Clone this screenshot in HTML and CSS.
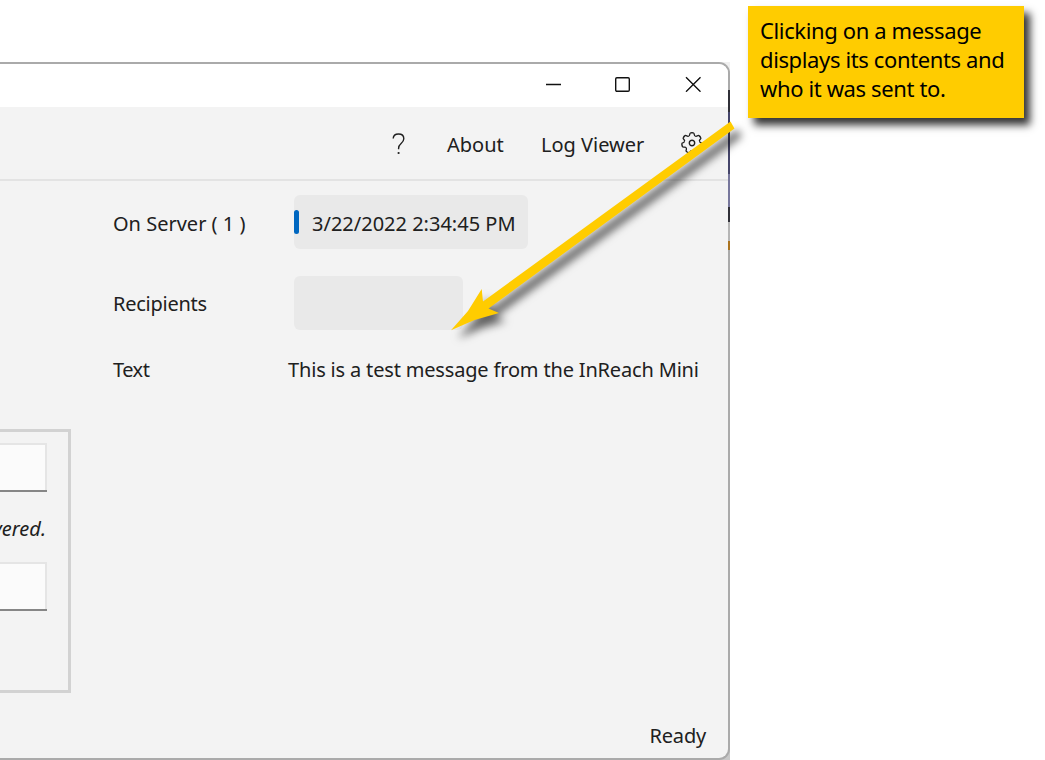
FILE: index.html
```html
<!DOCTYPE html>
<html lang="en">
<head>
<meta charset="utf-8">
<title>Messages</title>
<link rel="stylesheet" href="styles.css">
</head>
<body>
<div class="desktop">
  <main class="window">
    <header class="titlebar">
      <svg class="win-icon" width="16" height="16" viewBox="0 0 16 16"><path d="M1 8.500h15"/></svg>
      <svg class="win-icon" width="16" height="16" viewBox="0 0 16 16"><rect x=".7" y="1.700" width="13.600" height="13.600" rx="1.200"/></svg>
      <svg class="win-icon" width="16" height="16" viewBox="0 0 16 16"><path d="M1 1.200l14.500 14.500M15.500 1.200L1 15.700"/></svg>
    </header>
    <nav class="toolbar">
      <svg class="help" width="14" height="22" viewBox="0 0 14 22"><path d="M1.200 5.600C1.300 2.700 3.500 1 6.500 1c3.200 0 5.300 1.800 5.300 4.700 0 2.300-1.200 3.500-2.700 4.800C7.500 11.900 6.600 13 6.600 15.200v1"/><circle cx="6.600" cy="20" r="1.100"/></svg>
      <span class="about">About</span>
      <span class="log">Log Viewer</span>
      <svg class="gear" width="22" height="22" viewBox="-11 -11 22 22">
        <defs><path id="tooth" d="M-3.400-7.050Q-2.500-7-2.250-8.500Q-2.100-10-1.400-10.100Q0-10.400 1.400-10.100Q2.100-10 2.250-8.500Q2.500-7 3.400-7.050"/></defs>
        <use href="#tooth"/>
        <use href="#tooth" transform="rotate(51.430)"/>
        <use href="#tooth" transform="rotate(102.860)"/>
        <use href="#tooth" transform="rotate(154.290)"/>
        <use href="#tooth" transform="rotate(205.710)"/>
        <use href="#tooth" transform="rotate(257.140)"/>
        <use href="#tooth" transform="rotate(308.570)"/>
        <circle r="2.700"/>
      </svg>
    </nav>
    <div class="content">
      <aside class="side">
        <section class="panel">
          <div class="field"></div>
          <p class="note"><span>vered.</span></p>
          <div class="field"></div>
        </section>
      </aside>
      <section class="details">
        <div class="row server"><span class="label">On Server ( 1 )</span><div class="chip selected"><span class="date">3/22/2022 2:34:45 PM</span></div></div>
        <div class="row recipients"><span class="label">Recipients</span><div class="chip blank"></div></div>
        <div class="row message"><span class="label">Text</span><span class="body-text">This is a test message from the InReach Mini</span></div>
      </section>
    </div>
    <footer class="status"><span>Ready</span></footer>
  </main>
  <div class="backdrop-edge"></div>
</div>
<svg class="arrow" width="1045" height="760" viewBox="0 0 1045 760"><path d="M730.500 121.500L734.500 128.500L488.500 308.500L499 313L474.500 320L451 330.300L468 311L481.700 289L483 301.500Z"/></svg>
<aside class="callout"><span>Clicking on a message</span><span>displays its contents and</span><span>who it was sent to.</span></aside>
</body>
</html>
```
FILE: styles.css
```css
* { box-sizing: border-box; }
body {
  margin: 0;
  width: 1045px;
  height: 760px;
  overflow: hidden;
  background: #fff;
  color: #202020;
  font: 20px/30px "Noto Sans", "Open Sans", sans-serif;
  position: relative;
}
span { white-space: nowrap; }
.desktop {
  position: relative;
  width: 730px;
  height: 698px;
  margin-top: 62px;
  float: left;
  background: linear-gradient(#f0f0f0 50%, #c8c8c8 50%);
}
.backdrop-edge {
  position: absolute;
  right: 0;
  top: 28px;
  width: 2px;
  height: 160px;
  background: linear-gradient(#303038 0 22px, #45456a 22px 84px, #77779c 84px 117px, #303038 117px 132px, #b5b5b5 132px 151px, #aa731f 151px);
}
.window {
  width: 730px;
  height: 698px;
  display: flex;
  flex-direction: column;
  border: 2px solid #aaa;
  border-left: 0;
  border-radius: 0 11px 11px 0;
  overflow: hidden;
  background: #f3f3f3;
}
.titlebar {
  height: 43px;
  flex: none;
  background: #fff;
  display: flex;
  justify-content: flex-end;
  gap: 54px;
  padding: 12px 27px 0 0;
}
.win-icon { fill: none; stroke: #111; stroke-width: 1.4; }
.toolbar {
  height: 74px;
  flex: none;
  border-bottom: 2px solid #e3e3e3;
  display: flex;
  align-items: center;
  padding: 2px 0 0 392px;
}
.help { fill: none; stroke: #202020; stroke-width: 1.4; }
.help circle { fill: #202020; stroke: none; }
.about { margin-left: 41px; width: 94px; padding-top: 2px; }
.log { width: 140px; padding-top: 2px; }
.gear { fill: none; stroke: #202020; stroke-width: 1.4; margin-bottom: 2px; }
.content { flex: 1; display: flex; }
.side { width: 113px; padding-top: 248px; }
.panel {
  width: 71px;
  height: 264px;
  border: 3px solid #d2d2d2;
  border-left: 0;
  padding-top: 11px;
}
.field {
  width: 47px;
  height: 47px;
  margin-bottom: 2px;
  background: #fbfbfb;
  border: 2px solid #e5e5e5;
  border-left: 0;
  border-bottom: 0;
  box-shadow: 0 2px #868686;
}
.note {
  width: 46px;
  height: 70px;
  margin: 0;
  padding-top: 22px;
  display: flex;
  justify-content: flex-end;
  font-style: italic;
}
.details { padding-top: 14px; }
.row { display: flex; align-items: center; height: 54px; }
.label { width: 181px; }
.server .label, .date { padding-top: 3px; }
.recipients .label { padding-top: 2px; letter-spacing: -.25px; }
.chip { height: 54px; border-radius: 6px; background: #e9e9e9; }
.selected { width: 234px; display: flex; align-items: center; gap: 13px; }
.selected::before { content: ""; width: 5px; height: 24px; border-radius: 2.500px; background: #0067c0; }
.recipients { margin-top: 27px; }
.blank { width: 169px; }
.message { margin-top: 13px; letter-spacing: -.17px; }
.message .label { width: 175px; letter-spacing: -.5px; }
.status { height: 37px; flex: none; display: flex; justify-content: flex-end; padding-right: 22px; letter-spacing: -.2px; }
.arrow { position: absolute; left: 0; top: 0; filter: drop-shadow(7px 8px 4px rgba(0,0,0,.6)); }
.arrow path { fill: #fc0; }
.callout {
  position: absolute;
  left: 748.400px;
  top: 6px;
  width: 276px;
  height: 112px;
  padding: 10px 11.600px;
  display: flex;
  flex-direction: column;
  background: #fc0;
  box-shadow: 6px 7px 8px rgba(0,0,0,.8);
  color: #000;
  font-size: 22px;
  line-height: 29px;
  letter-spacing: -.37px;
}
```
